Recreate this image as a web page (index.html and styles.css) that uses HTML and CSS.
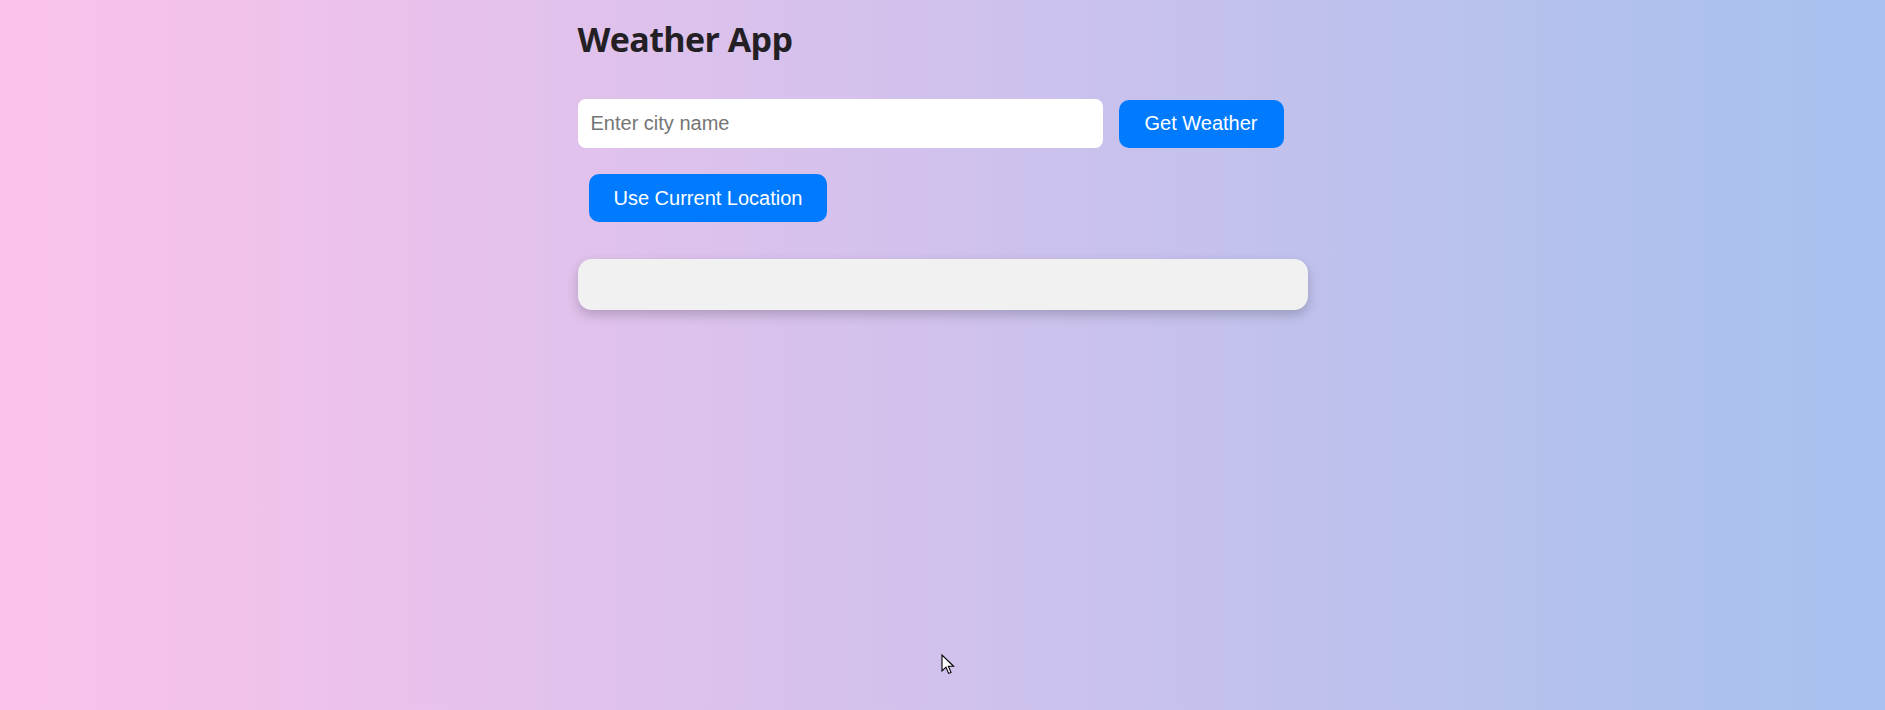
FILE: index.html
```html
<!DOCTYPE html>
<html lang="en">
<head>
<meta charset="utf-8">
<title>Weather App</title>
<link rel="stylesheet" href="styles.css">
</head>
<body>
<div class="app">
  <h1 class="title">Weather App</h1>
  <div class="search-row">
    <input class="city-input" type="text" placeholder="Enter city name">
    <button class="btn">Get Weather</button>
  </div>
  <div class="location-row">
    <button class="btn">Use Current Location</button>
  </div>
  <div class="result"></div>
</div>
<svg class="cursor" width="14" height="22" viewBox="0 0 14 22">
  <path d="M1 1 L1 17 L5 13.2 L7.6 19.4 L10 18.4 L7.4 12.3 L12.6 12.3 Z" fill="#fff" stroke="#000" stroke-width="1.1" stroke-linejoin="miter"/>
</svg>
</body>
</html>
```
FILE: styles.css
```css
html, body {
  margin: 0;
  padding: 0;
  height: 100%;
}
body {
  background: linear-gradient(to right, #fbc2eb, #a6c1ee);
  font-family: "Liberation Sans", Arial, sans-serif;
  position: relative;
  overflow: hidden;
}
.app {
  width: 730px;
  margin: 0 auto;
  padding-top: 18px;
}
.title {
  margin: 0;
  font-family: "Open Sans", "Noto Sans", sans-serif;
  font-weight: 700;
  font-size: 34px;
  line-height: 42px;
  color: #231f24;
  letter-spacing: -0.6px;
}
.search-row {
  margin-top: 39px;
  display: flex;
  align-items: center;
  gap: 16px;
}
.city-input {
  width: 525px;
  height: 49px;
  box-sizing: border-box;
  padding: 0 13px;
  border: none;
  border-radius: 8px;
  background: #fff;
  font-family: "Liberation Sans", Arial, sans-serif;
  font-size: 20px;
  color: #222;
  outline: none;
}
.city-input::placeholder {
  color: #757575;
}
.btn {
  height: 48px;
  padding: 0 26px;
  border: none;
  border-radius: 10px;
  background: #007bff;
  color: #fff;
  font-family: "Liberation Sans", Arial, sans-serif;
  font-size: 20px;
  cursor: pointer;
}
.location-row {
  margin-top: 26px;
  padding-left: 11px;
}
.location-row .btn {
  padding: 0 25px;
}
.result {
  margin-top: 37px;
  height: 51px;
  background: #f1f1f1;
  border-radius: 14px;
  box-shadow: 0 5px 12px rgba(0, 0, 0, 0.2);
}
.cursor {
  position: absolute;
  left: 941px;
  top: 654px;
}
```
